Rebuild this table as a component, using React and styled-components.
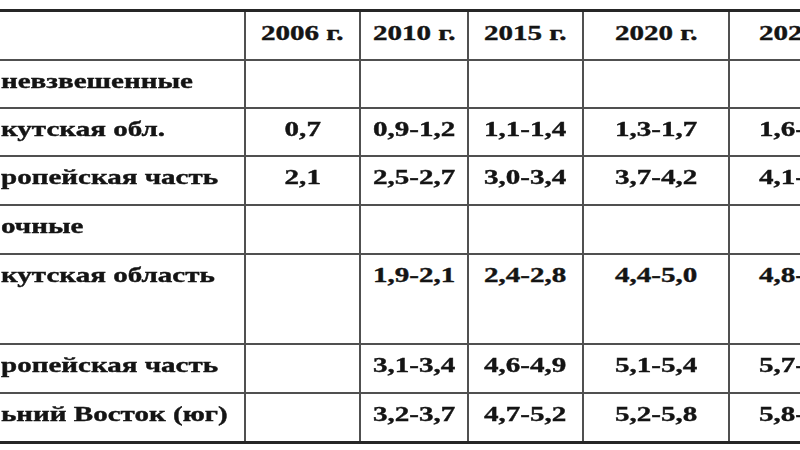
import React from "react";
import styled, { createGlobalStyle } from "styled-components";

const Global = createGlobalStyle`
  html, body { margin: 0; padding: 0; background: #fff; overflow: hidden; }
  #root { width: 800px; height: 450px; overflow: hidden; }
`;

const Page = styled.div`
  width: 800px;
  height: 450px;
  overflow: hidden;
  padding-top: 9px;
  box-sizing: border-box;
  background: #fff;
`;

const Grid = styled.div`
  display: grid;
  grid-template-columns: 244px 113px 106px 113px 144px 141px;
  grid-template-rows: 47px 46px 46px 47px 47px 88px 47px 47px;
  gap: 2px;
  width: max-content;
  background: #505050;
  border-top: 3px solid #262626;
  border-bottom: 3px solid #262626;
  filter: blur(0.3px);
`;

const Cell = styled.div`
  background: #fff;
  box-sizing: border-box;
  padding-top: ${(p) => (p.$head ? 9 : 8)}px;
  padding-left: ${(p) => (p.$left ? 1 : 0)}px;
  text-align: ${(p) => (p.$left ? "left" : "center")};
`;

const Text = styled.span`
  display: inline-block;
  font-family: "Liberation Serif", "Times New Roman", serif;
  font-weight: 700;
  font-size: 22px;
  line-height: 24px;
  color: #141414;
  -webkit-text-stroke: 0.4px #141414;
  white-space: nowrap;
  transform: scaleX(1.32);
  transform-origin: ${(p) => (p.$left ? "left" : "center")} center;
`;

const header = ["", "2006 г.", "2010 г.", "2015 г.", "2020 г.", "2025 г."];
const rows = [
  ["невзвешенные", "", "", "", "", ""],
  ["кутская обл.", "0,7", "0,9-1,2", "1,1-1,4", "1,3-1,7", "1,6-2,0"],
  ["ропейская часть", "2,1", "2,5-2,7", "3,0-3,4", "3,7-4,2", "4,1-4,6"],
  ["очные", "", "", "", "", ""],
  ["кутская область", "", "1,9-2,1", "2,4-2,8", "4,4-5,0", "4,8-5,4"],
  ["ропейская часть", "", "3,1-3,4", "4,6-4,9", "5,1-5,4", "5,7-6,0"],
  ["ьний Восток (юг)", "", "3,2-3,7", "4,7-5,2", "5,2-5,8", "5,8-6,4"],
];

export default function App() {
  return (
    <>
      <Global />
      <Page>
        <Grid>
          {header.map((h, i) => (
            <Cell key={"h" + i} $head $left={i === 0}>
              {h && <Text $left={i === 0}>{h}</Text>}
            </Cell>
          ))}
          {rows.map((r, ri) =>
            r.map((c, ci) => (
              <Cell key={ri + "-" + ci} $left={ci === 0}>
                {c && <Text $left={ci === 0}>{c}</Text>}
              </Cell>
            ))
          )}
        </Grid>
      </Page>
    </>
  );
}
